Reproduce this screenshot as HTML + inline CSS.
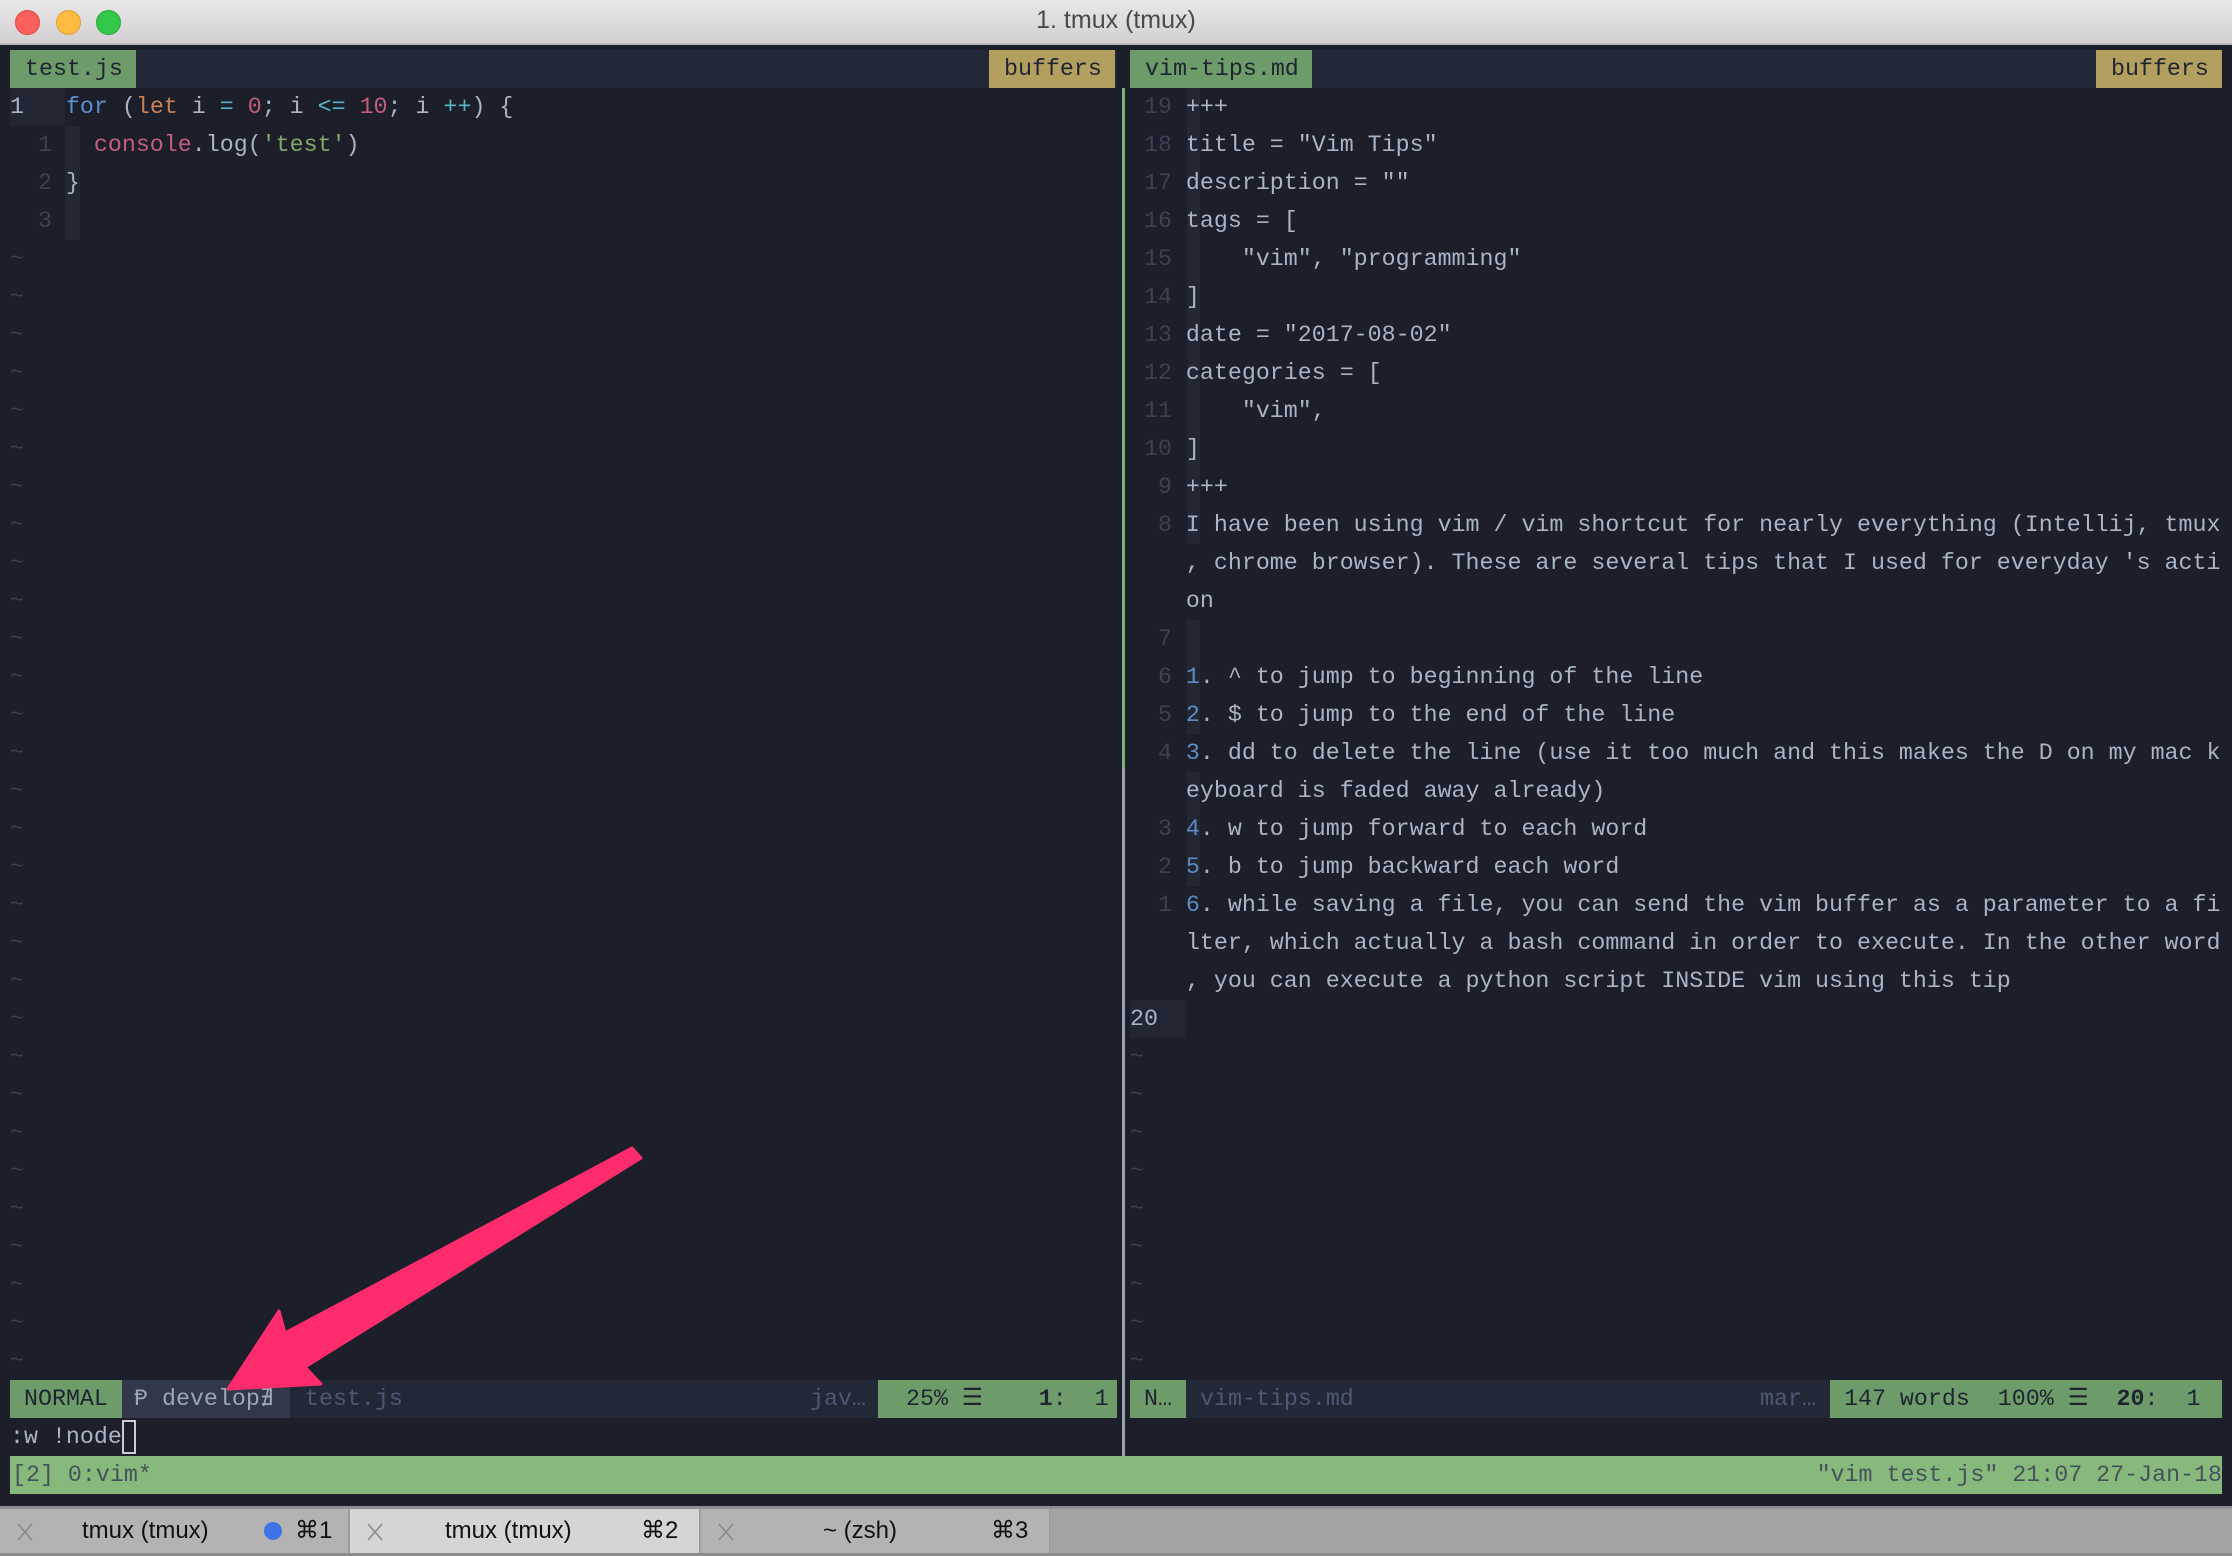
<!DOCTYPE html>
<html><head><meta charset="utf-8"><style>
*{margin:0;padding:0;box-sizing:border-box}
body{width:2232px;height:1556px;overflow:hidden;background:#1c1f29;position:relative;font-family:"Liberation Mono",monospace;font-size:23.3px;color:#a9b4c6}
.a{position:absolute}
.r{position:absolute;height:38px;line-height:38px;white-space:pre}
.dim{color:#3a4154}
.til{color:#3a4154}
.g{position:absolute;background:#232733}
.k{color:#1f2530}
.tb{position:absolute;top:1509px;height:44px;border-right:1px solid #999;font-family:'Liberation Sans',sans-serif;font-size:24px;line-height:44px;color:#111}
</style></head><body>
<div class="a" style="left:0;top:0;width:2232px;height:45px;background:linear-gradient(#e9e7e9,#d2d0d2);border-bottom:2px solid #b9b7b9"></div>
<div class="a" style="left:15px;top:10px;width:25px;height:25px;border-radius:50%;background:#fc605c;border:1px solid #de4a45"></div>
<div class="a" style="left:56px;top:10px;width:25px;height:25px;border-radius:50%;background:#fdbc40;border:1px solid #dea236"></div>
<div class="a" style="left:96px;top:10px;width:25px;height:25px;border-radius:50%;background:#34c84a;border:1px solid #27aa35"></div>
<div class="a" style="left:0;top:6px;width:2232px;text-align:center;font-family:'Liberation Sans',sans-serif;font-size:25px;color:#4a4a4a">1. tmux (tmux)</div>

<div class="a" style="left:10px;top:50px;width:1107px;height:38px;background:#232836"></div>
<div class="a" style="left:1130px;top:50px;width:1092px;height:38px;background:#232836"></div>
<div class="r k" style="left:10px;top:50px;width:126px;background:#6d9b6a;padding-left:15px">test.js</div>
<div class="r k" style="left:989px;top:50px;width:126px;background:#b39f5f;padding-left:15px">buffers</div>
<div class="r k" style="left:1130px;top:50px;width:182px;background:#6d9b6a;padding-left:15px">vim-tips.md</div>
<div class="r k" style="left:2096px;top:50px;width:126px;background:#b39f5f;padding-left:15px">buffers</div>

<div class="a" style="left:1122px;top:88px;width:3px;height:680px;background:#7fb07a"></div>
<div class="a" style="left:1122px;top:768px;width:3px;height:688px;background:#9aa3b3"></div>

<div class="a" style="left:10px;top:88px;width:55px;height:38px;background:#222633"></div>
<div class="g" style="left:65px;top:126px;width:15px;height:114px"></div>
<div class="r" style="left:10px;top:88px">1   <span style="color:#5b8fd0">for</span> (<span style="color:#c8825a">let</span> i <span style="color:#56b6c2">=</span> <span style="color:#c25d7c">0</span>; i <span style="color:#56b6c2">&lt;=</span> <span style="color:#c25d7c">10</span>; i <span style="color:#56b6c2">++</span>) {</div>
<div class="r" style="left:10px;top:126px"><span class="dim">  1 </span>  <span style="color:#c25d7c">console</span>.log(<span style="color:#7fa86a">'test'</span>)</div>
<div class="r" style="left:10px;top:164px"><span class="dim">  2 </span>}</div>
<div class="r" style="left:10px;top:202px"><span class="dim">  3 </span></div>
<div class="r til" style="left:10px;top:240px;line-height:38px">~
~
~
~
~
~
~
~
~
~
~
~
~
~
~
~
~
~
~
~
~
~
~
~
~
~
~
~
~
~</div>

<div class="g" style="left:1187px;top:88px;width:13px;height:418px"></div>
<div class="g" style="left:1187px;top:506px;width:13px;height:38px"></div>
<div class="g" style="left:1187px;top:620px;width:13px;height:114px"></div>
<div class="g" style="left:1187px;top:772px;width:13px;height:114px"></div>
<div class="a" style="left:1130px;top:1000px;width:56px;height:38px;background:#222633"></div>
<div class="r" style="left:1130px;top:88px"><span class="dim"> 19 </span>+++
<span class="dim"> 18 </span>title = "Vim Tips"
<span class="dim"> 17 </span>description = ""
<span class="dim"> 16 </span>tags = [
<span class="dim"> 15 </span>    "vim", "programming"
<span class="dim"> 14 </span>]
<span class="dim"> 13 </span>date = "2017-08-02"
<span class="dim"> 12 </span>categories = [
<span class="dim"> 11 </span>    "vim",
<span class="dim"> 10 </span>]
<span class="dim">  9 </span>+++
<span class="dim">  8 </span>I have been using vim / vim shortcut for nearly everything (Intellij, tmux
    , chrome browser). These are several tips that I used for everyday 's acti
    on
<span class="dim">  7 </span>
<span class="dim">  6 </span><span style="color:#5d8bc4">1</span>. ^ to jump to beginning of the line
<span class="dim">  5 </span><span style="color:#5d8bc4">2</span>. $ to jump to the end of the line
<span class="dim">  4 </span><span style="color:#5d8bc4">3</span>. dd to delete the line (use it too much and this makes the D on my mac k
    eyboard is faded away already)
<span class="dim">  3 </span><span style="color:#5d8bc4">4</span>. w to jump forward to each word
<span class="dim">  2 </span><span style="color:#5d8bc4">5</span>. b to jump backward each word
<span class="dim">  1 </span><span style="color:#5d8bc4">6</span>. while saving a file, you can send the vim buffer as a parameter to a fi
    lter, which actually a bash command in order to execute. In the other word
    , you can execute a python script INSIDE vim using this tip
20
<span class="til">~
~
~
~
~
~
~
~
~</span></div>

<div class="r k" style="left:10px;top:1380px;width:112px;background:#6d9b6a;padding-left:14px">NORMAL</div>
<div class="r" style="left:122px;top:1380px;width:168px;background:#303849;color:#9aa5b8;padding-left:12px">&#x2C63; develop&#x2204;</div>
<div class="r" style="left:290px;top:1380px;width:588px;background:#232836;color:#4d5872;padding-left:15px">test.js<span style="position:absolute;left:520px">jav…</span></div>
<div class="r k" style="left:878px;top:1380px;width:239px;background:#6d9b6a;padding-left:28px">25% ☰    <b>1</b>:  1</div>
<div class="r k" style="left:1130px;top:1380px;width:56px;background:#6d9b6a;padding-left:14px">N…</div>
<div class="r" style="left:1186px;top:1380px;width:644px;background:#232836;color:#4d5872;padding-left:14px">vim-tips.md<span style="position:absolute;left:574px">mar…</span></div>
<div class="r k" style="left:1830px;top:1380px;width:392px;background:#6d9b6a;padding-left:14px">147 words  100% ☰  <b>20</b>:  1</div>

<div class="r" style="left:10px;top:1418px;color:#a9b4c6">:w !node</div>
<div class="a" style="left:122px;top:1420px;width:14px;height:34px;border:2px solid #c8ccd4"></div>

<div class="r" style="left:10px;top:1456px;width:2212px;background:#87b87c;color:#45535a;padding-left:2px">[2] 0:vim*</div>
<div class="r" style="right:10px;top:1456px;color:#45535a">"vim test.js" 21:07 27-Jan-18</div>

<div class="a" style="left:0;top:1506px;width:2232px;height:50px;background:#a3a3a3;border-top:3px solid #8e8e8e;border-bottom:3px solid #8c8c8c"></div>
<div class="tb" style="left:0;width:349px;background:#b3b3b3">
 <svg class="a" style="left:17px;top:14px" width="16" height="18"><path d="M1 1L15 17M15 1L1 17" stroke="#888" stroke-width="1.5"/></svg><span class="a" style="left:82px">tmux (tmux)</span><span class="a" style="left:264px;top:13px;width:18px;height:18px;border-radius:50%;background:#3f74e6"></span><span class="a" style="left:295px">⌘1</span></div>
<div class="tb" style="left:350px;width:350px;background:#d5d5d5">
 <svg class="a" style="left:17px;top:14px" width="16" height="18"><path d="M1 1L15 17M15 1L1 17" stroke="#888" stroke-width="1.5"/></svg><span class="a" style="left:95px">tmux (tmux)</span><span class="a" style="left:291px">⌘2</span></div>
<div class="tb" style="left:701px;width:349px;background:#b3b3b3">
 <svg class="a" style="left:17px;top:14px" width="16" height="18"><path d="M1 1L15 17M15 1L1 17" stroke="#888" stroke-width="1.5"/></svg><span class="a" style="left:122px">~ (zsh)</span><span class="a" style="left:290px">⌘3</span></div>

<svg class="a" style="left:0;top:0" width="2232" height="1556">
<polygon fill="#fe2c6d" points="632,1148 641,1158 305,1367 321,1384 228,1389 279,1311 285,1333" stroke="#fe2c6d" stroke-width="3" stroke-linejoin="round"/>
</svg>
</body></html>
